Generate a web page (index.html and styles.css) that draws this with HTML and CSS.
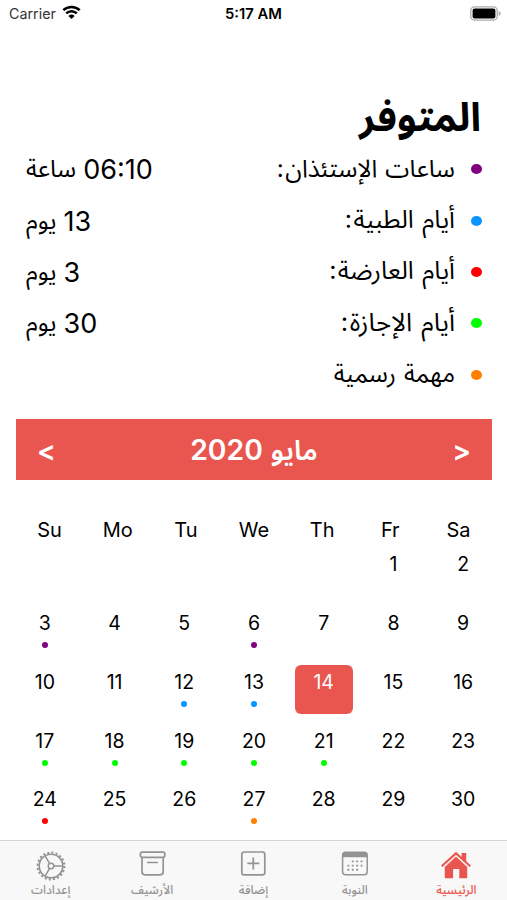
FILE: index.html
```html
<!DOCTYPE html>
<html lang="ar">
<head>
<meta charset="utf-8">
<title>المتوفر</title>
<link rel="stylesheet" href="styles.css">
</head>
<body>
<div class="screen">
  <header class="status">
    <div class="carrier"><span>Carrier</span>
      <svg width="19" height="15" viewBox="0 0 19 15"><path d="M1.3 5.2a11.8 11.8 0 0 1 16.4 0M4.2 8.3a7.6 7.6 0 0 1 10.6 0" fill="none" stroke="#000" stroke-width="2.5"/><path d="M9.5 14 6.4 11a4.5 4.5 0 0 1 6.2 0z"/></svg>
    </div>
    <div class="clock">5:17 AM</div>
    <div class="power"><svg width="32" height="16" viewBox="0 0 32 16"><rect x=".8" y=".8" width="26.4" height="13.4" rx="3.8" fill="#fff" stroke="#aaa" stroke-width="1.3"/><rect x="2.6" y="2.6" width="22.8" height="9.8" rx="2"/><path d="M28.7 5v5q2-.8 2-2.5t-2-2.5" fill="#aaa"/></svg></div>
  </header>

  <main>
    <h1 class="title" dir="rtl">المتوفر</h1>
    <ul class="balances" dir="rtl">
      <li><i class="mark purple"></i><span class="name">ساعات الإستئذان<span class="colon">:</span></span><span class="value"><b>06:10</b><span>ساعة</span></span></li>
      <li><i class="mark blue"></i><span class="name wide">أيام الطبية<span class="colon">:</span></span><span class="value"><b>13</b><span>يوم</span></span></li>
      <li><i class="mark red"></i><span class="name wide">أيام العارضة<span class="colon">:</span></span><span class="value"><b>3</b><span>يوم</span></span></li>
      <li><i class="mark green"></i><span class="name wider">أيام الإجازة<span class="colon">:</span></span><span class="value"><b>30</b><span>يوم</span></span></li>
      <li><i class="mark orange"></i><span class="name">مهمة رسمية</span></li>
    </ul>

    <div class="month">
      <span class="arrow">&lt;</span>
      <span class="month-name" dir="rtl"><span>مايو</span><b>2020</b></span>
      <span class="arrow">&gt;</span>
    </div>

    <div class="weekdays"><span>Su</span><span>Mo</span><span>Tu</span><span>We</span><span>Th</span><span>Fr</span><span>Sa</span></div>
    <div class="days">
      <div></div><div></div><div></div><div></div><div></div><div>1</div><div>2</div>
      <div>3<i class="purple"></i></div><div>4</div><div>5</div><div>6<i class="purple"></i></div><div>7</div><div>8</div><div>9</div>
      <div>10</div><div>11</div><div>12<i class="blue"></i></div><div>13<i class="blue"></i></div><div class="today">14</div><div>15</div><div>16</div>
      <div>17<i class="green"></i></div><div>18<i class="green"></i></div><div>19<i class="green"></i></div><div>20<i class="green"></i></div><div>21<i class="green"></i></div><div>22</div><div>23</div>
      <div>24<i class="red"></i></div><div>25</div><div>26</div><div>27<i class="orange"></i></div><div>28</div><div>29</div><div>30</div>
    </div>
  </main>

  <nav class="tabs">
    <a><svg width="32" height="32" viewBox="0 0 32 32" fill="none" stroke="currentColor"><circle cx="16" cy="16" r="13.4" stroke-width="2" stroke-dasharray="2.1 2.11"/><circle cx="16" cy="16" r="11.8" stroke-width="1.6"/><circle cx="16" cy="16" r="2.8" stroke-width="1.4"/><path d="M18.8 16h9M14.6 13.6 10.1 5.8M14.6 18.4l-4.5 7.8" stroke-width="1.5"/></svg><span>إعدادات</span></a>
    <a><svg width="32" height="32" viewBox="0 0 32 32" fill="none" stroke="currentColor" stroke-width="1.7"><rect x="4.4" y="2.2" width="24.4" height="5.2" rx="1.8"/><path d="M6 7.5v14.3q0 3 3 3h15.2q3 0 3-3V7.5M11.7 12.5h9.6" stroke-linecap="round"/></svg><span>الأرشيف</span></a>
    <a><svg width="32" height="32" viewBox="0 0 32 32" fill="none" stroke="currentColor" stroke-width="1.7"><rect x="4.8" y="2" width="23" height="22.8" rx="2.4"/><path d="M16.3 7.4v12M10.3 13.4h12"/></svg><span>إضافة</span></a>
    <a><svg width="32" height="32" viewBox="0 0 32 32" fill="none" stroke="currentColor"><rect x="3.6" y="2.2" width="24.6" height="22.6" rx="3" stroke-width="1.5"/><path d="M3.6 7.2V5q0-3 3-3h18.6q3 0 3 3v2.2z" fill="currentColor" stroke="none"/><path d="M12.8 11.4h12M8.4 15.6h16.4M8.4 19.8h12" stroke-width="1.9" stroke-dasharray="1.9 2.5"/></svg><span>النوبة</span></a>
    <a class="active"><svg width="32" height="32" viewBox="0 0 32 32" fill="currentColor"><path d="M1 15.6 16 1.8l5.6 5.1V3h4.6v8.2l4.8 4.4-1.4 1.5L16 4.7 2.4 17.1z"/><path d="M4.8 17 16 6.4 27.2 17v11.3h-7.9v-9.2h-6.2v9.2H4.8z"/></svg><span>الرئيسية</span></a>
  </nav>
</div>
</body>
</html>
```

FILE: styles.css
```css
* { box-sizing: border-box; }
body { margin: 0; background: #fff; color: #000; font-family: Inter, "Noto Sans Arabic", "DejaVu Sans", sans-serif; }
.screen { width: 507px; height: 900px; overflow: hidden; display: flex; flex-direction: column; }
.status { height: 28px; flex: none; display: grid; grid-template-columns: 1fr 1fr 1fr; align-items: center; padding: 0 7px 1px 9px; font-size: 14px; }
.carrier { display: flex; align-items: center; gap: 6px; color: #333; font-size: 14.3px; }
.carrier svg { margin-top: -2px; }
.clock { text-align: center; font-weight: 600; font-size: 14.8px; margin-left: -2px; padding-top: 1px; }
.power { display: flex; justify-content: flex-end; }
.power svg { margin-right: -2px; }
main { flex: 1; min-height: 0; }
.title { margin: 61px 26px 0; height: 55px; line-height: 56px; font-size: 39.5px; font-weight: 700; white-space: nowrap; }
.balances { list-style: none; margin: 0; padding: 0 25px 0 26px; }
.balances li { height: 51.4px; display: flex; align-items: center; font-size: 24.3px; line-height: 48px; white-space: nowrap; }
.mark { width: 11px; height: 10px; border-radius: 50%; margin: 0 0 1px 16px; }
.name { font-size: 24.4px; word-spacing: 1px; padding-bottom: 4px; }
.name.wide { font-size: 25px; word-spacing: 1.5px; }
.name.wider { font-size: 25.7px; word-spacing: 2px; }
.colon { margin-right: 1.5px; }
.value { margin-right: auto; display: flex; gap: 7px; padding-bottom: 3px; }
.value b { font-weight: 400; font-size: 27px; padding-top: 2px; margin-bottom: -2px; }
.purple { background: #800080; }
.blue { background: #0a95ff; }
.red { background: #f00; }
.green { background: #0f0; }
.orange { background: #ff8000; }
.month { margin: 18px 15px 0 16px; height: 61px; background: #e9564f; color: #fff; display: flex; align-items: center; justify-content: space-between; padding: 0 21px; font-weight: 600; font-size: 27.5px; white-space: nowrap; }
.month-name { display: flex; align-items: center; gap: 8px; line-height: 50px; padding-top: 1px; }
.month-name b { font-weight: 600; font-size: 28.3px; }
.arrow { font-size: 28px; padding-top: 4px; }
.weekdays { display: grid; grid-template-columns: repeat(7, 1fr); margin: 36px 14.5px 0 15.5px; height: 28px; line-height: 28px; font-size: 20px; text-align: center; }
.days { display: grid; grid-template-columns: repeat(7, 1fr); grid-auto-rows: 48.7px; row-gap: 10px; margin: 3.5px 9px 0 10px; font-size: 19.5px; }
.days div { display: flex; flex-direction: column; align-items: center; line-height: 35px; }
.days i { width: 6px; height: 6px; border-radius: 50%; margin-top: 1px; }
.days .today { width: 58px; justify-self: center; background: #e9564f; color: #fff; border-radius: 6px; }
.tabs { flex: none; height: 60px; border-top: 1px solid #d5d5d5; background: #f8f8f8; display: grid; grid-template-columns: repeat(5, 1fr); color: #939393; }
.tabs a { display: flex; flex-direction: column; align-items: center; padding-top: 9px; font-size: 12px; font-weight: 500; line-height: 16px; white-space: nowrap; }
.tabs .active { color: #e9564f; }
```
